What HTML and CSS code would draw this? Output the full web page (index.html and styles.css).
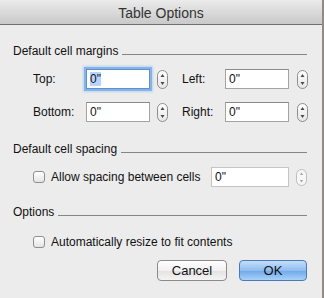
FILE: index.html
```html
<!DOCTYPE html>
<html>
<head>
    <title>Table Options</title>
    <link rel="stylesheet" href="styles.css">
</head>
<body>
    <div class="window">
        <div class="titlebar">Table Options</div>
        <div class="content">
            <div class="section-head">
                <span class="section-label">Default cell margins</span>
                <span class="section-line"></span>
            </div>
            <div class="row row-first">
                <span class="label label-left">Top:</span>
                <div class="field field-focus"><span class="selected">0"</span></div>
                <span class="stepper">
                    <svg width="11" height="19" viewBox="0 0 11 19"><defs><linearGradient id="sg" x1="0" y1="0" x2="0" y2="1"><stop offset="0" stop-color="#ffffff"/><stop offset="1" stop-color="#e6e6e6"/></linearGradient></defs><rect x="0.5" y="0.5" width="10" height="18" rx="5" fill="url(#sg)" stroke="#8c8c8c"/><path d="M3.5 7 L5.5 4 L7.5 7 Z M3.5 12 L5.5 15 L7.5 12 Z" fill="#4a4a4a"/></svg>
                </span>
                <span class="label label-right">Left:</span>
                <div class="field">0"</div>
                <span class="stepper stepper-end">
                    <svg width="11" height="19" viewBox="0 0 11 19"><rect x="0.5" y="0.5" width="10" height="18" rx="5" fill="url(#sg)" stroke="#8c8c8c"/><path d="M3.5 7 L5.5 4 L7.5 7 Z M3.5 12 L5.5 15 L7.5 12 Z" fill="#4a4a4a"/></svg>
                </span>
            </div>
            <div class="row row-second">
                <span class="label label-left">Bottom:</span>
                <div class="field">0"</div>
                <span class="stepper">
                    <svg width="11" height="19" viewBox="0 0 11 19"><rect x="0.5" y="0.5" width="10" height="18" rx="5" fill="url(#sg)" stroke="#8c8c8c"/><path d="M3.5 7 L5.5 4 L7.5 7 Z M3.5 12 L5.5 15 L7.5 12 Z" fill="#4a4a4a"/></svg>
                </span>
                <span class="label label-right">Right:</span>
                <div class="field">0"</div>
                <span class="stepper stepper-end">
                    <svg width="11" height="19" viewBox="0 0 11 19"><rect x="0.5" y="0.5" width="10" height="18" rx="5" fill="url(#sg)" stroke="#8c8c8c"/><path d="M3.5 7 L5.5 4 L7.5 7 Z M3.5 12 L5.5 15 L7.5 12 Z" fill="#4a4a4a"/></svg>
                </span>
            </div>

            <div class="section-head section-spacing">
                <span class="section-label">Default cell spacing</span>
                <span class="section-line"></span>
            </div>
            <div class="row row-first">
                <span class="checkbox"></span>
                <span class="check-label spacing-label">Allow spacing between cells</span>
                <div class="field field-wide">0"</div>
                <span class="stepper stepper-wide">
                    <svg width="11" height="17" viewBox="0 0 11 17"><rect x="0.5" y="0.5" width="10" height="16" rx="5" fill="#f6f6f6" stroke="#bdbdbd"/><path d="M3.8 6 L5.5 3.5 L7.2 6 Z M3.8 11 L5.5 13.5 L7.2 11 Z" fill="#a8a8a8"/></svg>
                </span>
            </div>

            <div class="section-head section-options">
                <span class="section-label">Options</span>
                <span class="section-line"></span>
            </div>
            <div class="row row-check">
                <span class="checkbox"></span>
                <span class="check-label">Automatically resize to fit contents</span>
            </div>

            <div class="buttons">
                <button class="button">Cancel</button>
                <button class="button button-default">OK</button>
            </div>
        </div>
    </div>
</body>
</html>
```

FILE: styles.css
```css
body {
    margin: 0;
    background: #8f8b87;
    font-family: "Liberation Sans", Arial, sans-serif;
    font-size: 12px;
    color: #111;
}
.window {
    width: 322px;
    height: 298px;
    background: #ececec;
}
.titlebar {
    height: 24px;
    line-height: 26px;
    border-bottom: 1px solid #6f6f6f;
    background: linear-gradient(#ebebeb, #c9c9c9);
    text-align: center;
    font-size: 14px;
    color: #333;
}
.content {
    padding: 18px 15px 0 13px;
}
.section-head {
    display: flex;
    height: 16px;
    line-height: 16px;
}
.section-line {
    flex: 1;
    height: 0;
    margin-top: 11px;
    margin-left: 4px;
    border-top: 1px solid #858585;
}
.section-spacing {
    margin-top: 19px;
}
.section-options {
    margin-top: 17px;
}
.row {
    display: flex;
    align-items: center;
    height: 20px;
    padding-left: 20px;
}
.row > * {
    flex-shrink: 0;
}
.row-first {
    margin-top: 10px;
}
.row-second {
    margin-top: 13px;
}
.row-check {
    margin-top: 12px;
}
.label-left {
    width: 53px;
}
.label-right {
    width: 43px;
}
.field {
    box-sizing: border-box;
    width: 64px;
    height: 20px;
    line-height: 18px;
    padding-left: 3px;
    background: #fff;
    border: 1px solid #a3a3a3;
    border-top-color: #8a8a8a;
}
.field-focus {
    border-color: #5f8fcf;
    box-shadow: 0 0 0 2px #86b4e8, 0 0 2px 3px #b9d3f0;
}
.selected {
    background: #b5d5fe;
}
.field-wide {
    width: 78px;
    border-color: #c4c4c4;
}
.stepper {
    display: flex;
    width: 11px;
    height: 19px;
    margin-left: 7px;
    margin-right: 14px;
}
.stepper-end {
    margin-left: 8px;
    margin-right: 0;
}
.stepper-wide {
    height: 17px;
    margin-right: 0;
}
.checkbox {
    box-sizing: border-box;
    width: 12px;
    height: 12px;
    margin-right: 6px;
    border: 1px solid #8e8e8e;
    border-radius: 3px;
    background: linear-gradient(#ffffff, #e4e4e4);
}
.check-label {
    white-space: nowrap;
}
.spacing-label {
    width: 160px;
}
.buttons {
    display: flex;
    justify-content: flex-end;
    gap: 12px;
    margin-top: 8px;
}
.button {
    width: 70px;
    height: 21px;
    padding: 0;
    font-family: "Liberation Sans", Arial, sans-serif;
    font-size: 13px;
    color: #111;
    border: 1px solid #8a8a8a;
    border-radius: 4px;
    background: linear-gradient(#ffffff, #f1f1f1 50%, #e2e2e2 51%, #f4f4f4);
}
.button-default {
    width: 68px;
    border-color: #4b79b8;
    background: linear-gradient(#c5def8, #8fbdf0 50%, #6ea8ea 51%, #a9d1f7);
}
```
